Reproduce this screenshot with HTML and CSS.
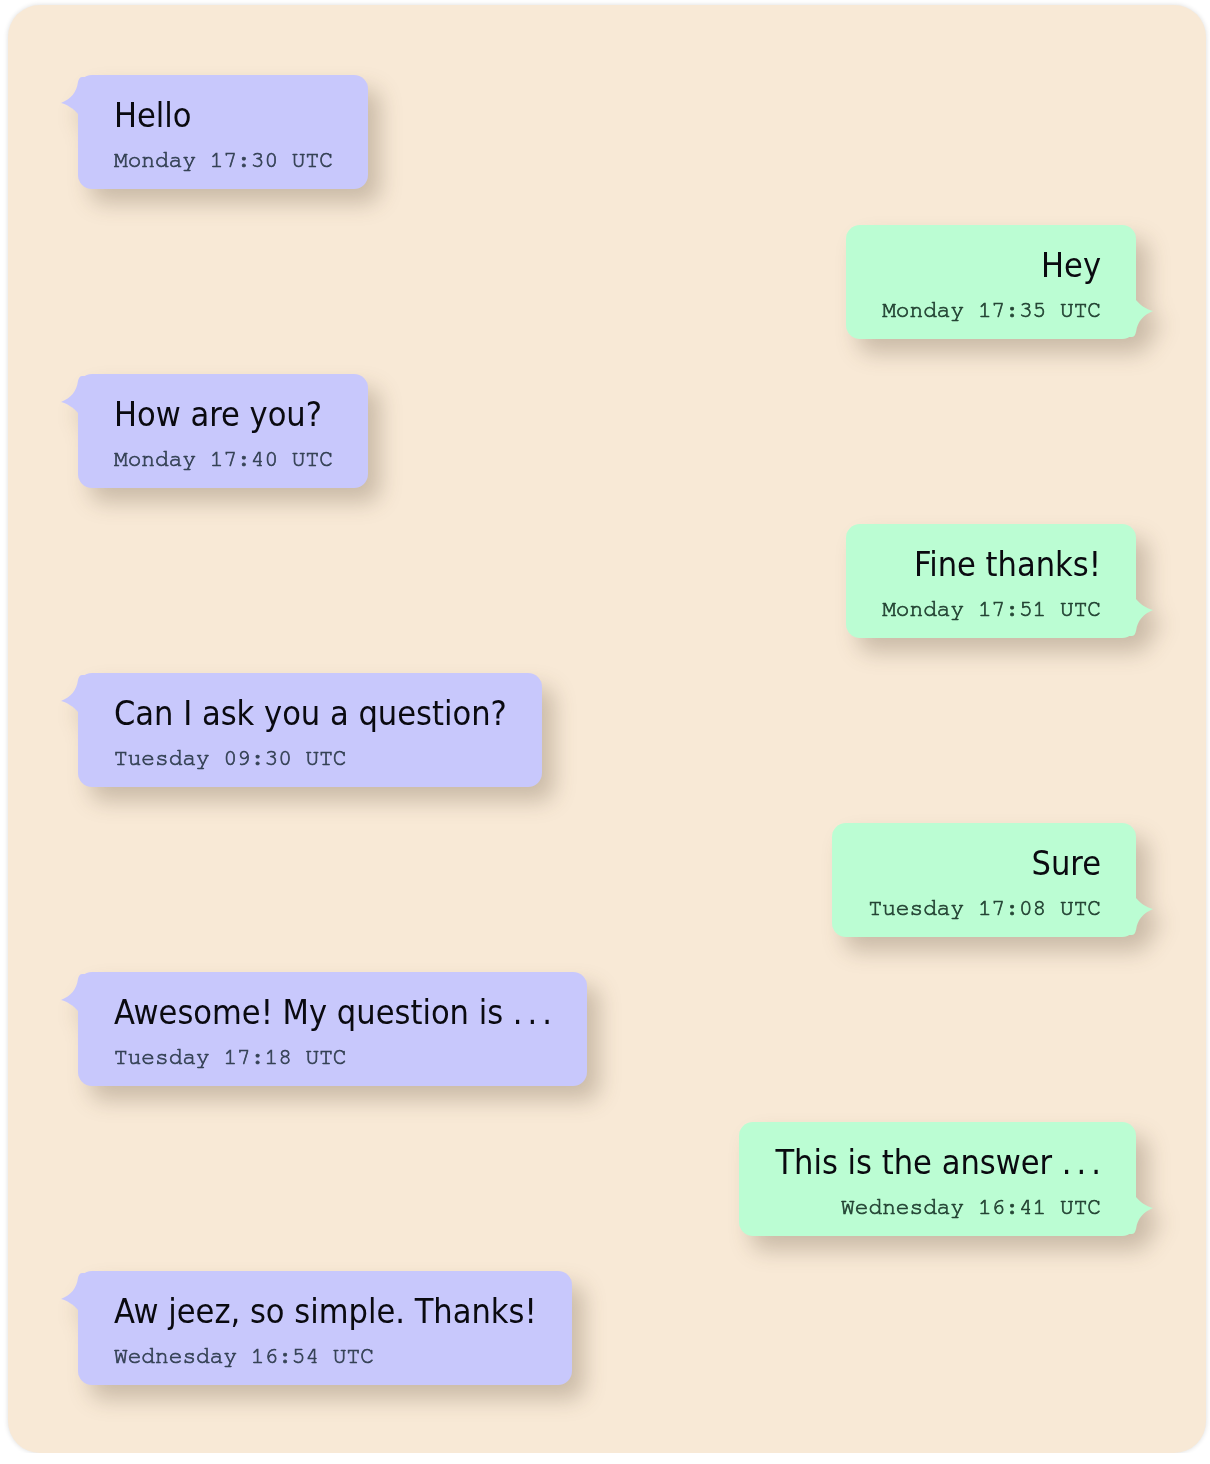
FILE: index.html
```html
<!DOCTYPE html>
<html>
<head>
<meta charset="utf-8">
<link rel="stylesheet" href="styles.css">
</head>
<body>
<div class="chat">
  <div class="msg left"><div class="text">Hello</div><div class="time">Monday 17:30 UTC</div></div>
  <div class="msg right"><div class="text">Hey</div><div class="time">Monday 17:35 UTC</div></div>
  <div class="msg left"><div class="text">How are you?</div><div class="time">Monday 17:40 UTC</div></div>
  <div class="msg right"><div class="text">Fine thanks!</div><div class="time">Monday 17:51 UTC</div></div>
  <div class="msg left"><div class="text">Can I ask you a question?</div><div class="time">Tuesday 09:30 UTC</div></div>
  <div class="msg right"><div class="text">Sure</div><div class="time">Tuesday 17:08 UTC</div></div>
  <div class="msg left"><div class="text">Awesome! My question is <span class="dots">...</span></div><div class="time">Tuesday 17:18 UTC</div></div>
  <div class="msg right"><div class="text">This is the answer <span class="dots">...</span></div><div class="time">Wednesday 16:41 UTC</div></div>
  <div class="msg left"><div class="text">Aw jeez, so simple. Thanks!</div><div class="time">Wednesday 16:54 UTC</div></div>
</div>
</body>
</html>
```
FILE: styles.css
```css
html, body {
  margin: 0;
  padding: 0;
  background: #ffffff;
}
body {
  padding: 5px 4px 0 8px;
}
.chat {
  background: #f8e9d6;
  border-radius: 32px;
  box-shadow: 0 0 5px rgba(0, 0, 0, 0.14);
  padding: 70px 70px 68px 70px;
  display: flex;
  flex-direction: column;
  gap: 35.5px;
}
.msg {
  position: relative;
  border-radius: 14px;
  padding: 20px 35px 15px 36px;
  filter: drop-shadow(12px 14px 11px rgba(60, 40, 20, 0.24));
}
.msg::before {
  content: "";
  position: absolute;
  width: 30px;
  height: 40px;
  background: inherit;
  clip-path: path('M30 0 L21 0 C18.5 0 17.4 3 16.8 6 C15.5 15 10 22 0 26 C7 28 13 32 17 37 L17 40 L30 40 Z');
}
.left {
  align-self: flex-start;
  background: #c8c8fc;
}
.left::before {
  left: -17px;
  top: 2px;
}
.right {
  align-self: flex-end;
  background: #bbfdd3;
  text-align: right;
}
.right::before {
  right: -17px;
  bottom: 2px;
  transform: rotate(180deg);
}
.text {
  font-family: "DejaVu Sans Condensed", "DejaVu Sans", sans-serif;
  font-size: 34px;
  line-height: 40px;
  color: #0a0a10;
  white-space: nowrap;
}
.dots {
  letter-spacing: 5px;
  margin-right: -5px;
}
.time {
  margin-top: 13px;
  font-family: "FreeMono", "Liberation Mono", monospace;
  font-size: 22.8px;
  line-height: 26px;
  white-space: nowrap;
  -webkit-text-stroke: 0.7px currentColor;
}
.left .time {
  color: #354255;
}
.right .time {
  color: #244434;
}
```
